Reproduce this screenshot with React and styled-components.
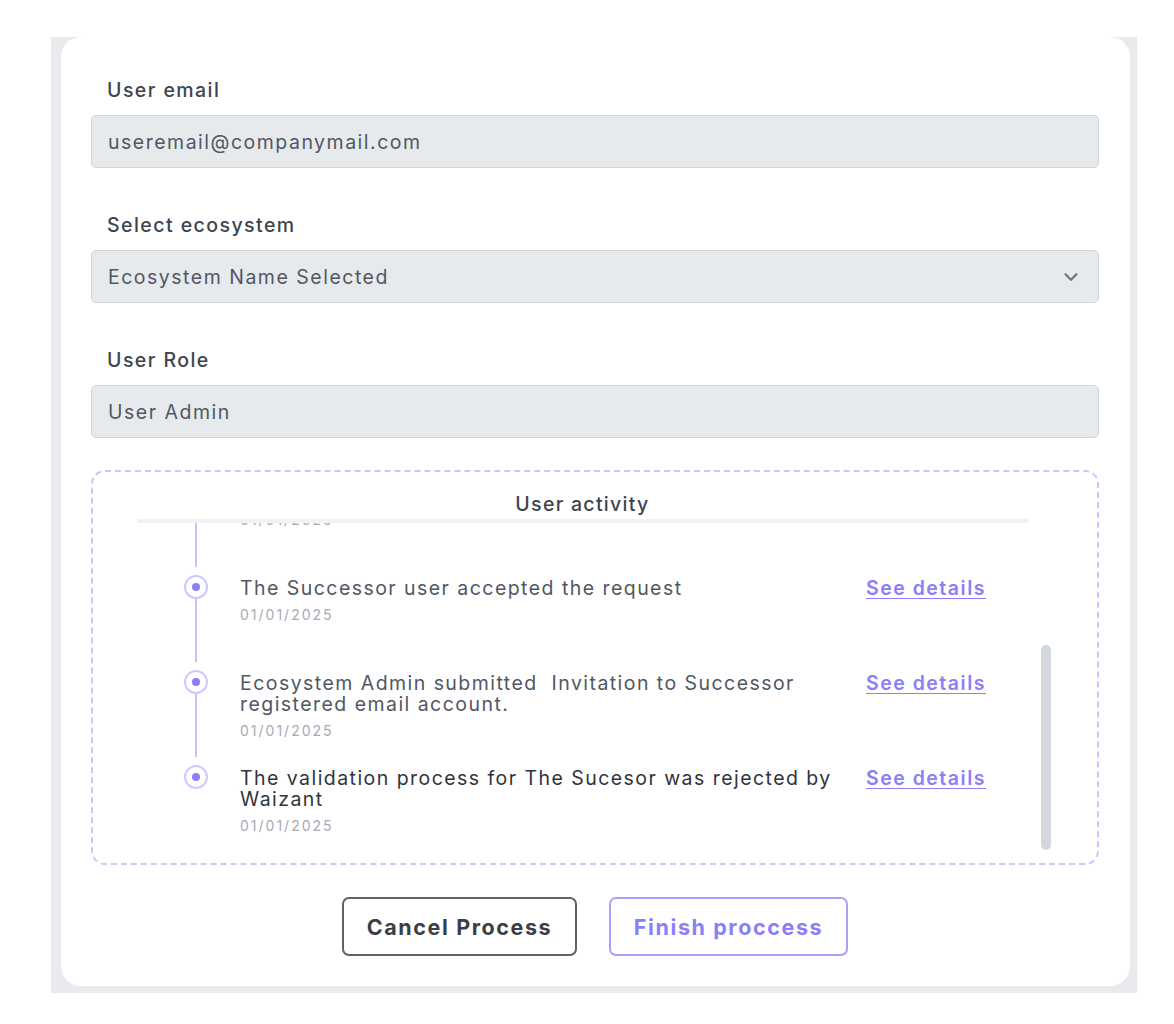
import React, { useLayoutEffect, useRef } from 'react';
import styled, { createGlobalStyle } from 'styled-components';
import { ChevronDown } from 'lucide-react';

const GlobalStyle = createGlobalStyle`
    body {
        margin: 0;
        background: #fff;
        font-family: 'Inter', 'Liberation Sans', sans-serif;
    }
`;

const Page = styled.div`
    padding: 37px 0 0 51px;
`;

const Frame = styled.div`
    width: 1086px;
    box-sizing: border-box;
    background: #e8eaed;
    padding: 0 7px 7px 10px;
`;

const Card = styled.div`
    background: #fff;
    border-radius: 20px;
    padding: 42px 31px 30px 30px;
    display: flex;
    flex-direction: column;
`;

const Field = styled.div`
    display: flex;
    flex-direction: column;
    margin-bottom: 46px;
`;

const Label = styled.label`
    padding-left: 16px;
    margin-bottom: 14px;
    font-size: 19.5px;
    line-height: 22px;
    font-weight: 500;
    letter-spacing: 1.45px;
    color: #3d4451;
`;

const InputBox = styled.div`
    height: 53px;
    box-sizing: border-box;
    display: flex;
    align-items: center;
    justify-content: space-between;
    padding: 0 16px 0 16px;
    background: #e7eaed;
    border: 1px solid #d0d5db;
    border-radius: 5px;
    font-size: 19.5px;
    letter-spacing: 1.5px;
    color: #505764;
    svg {
        color: #6b7280;
    }
`;

const ActivityBox = styled.div`
    margin-top: -14px;
    border: 2px dashed #cdc6fb;
    border-radius: 14px;
    padding: 21px 46px 13px 44px;
`;

const ActivityHeader = styled.div`
    width: 891px;
    text-align: center;
    font-size: 19.5px;
    line-height: 22px;
    font-weight: 500;
    letter-spacing: 1.3px;
    color: #3d4451;
    padding-bottom: 4px;
    border-bottom: 4px solid #f1f3f3;
`;

const ScrollArea = styled.div`
    display: flex;
    height: 327px;
`;

const Scroller = styled.div`
    flex: 1;
    overflow-y: auto;
    scrollbar-width: none;
    &::-webkit-scrollbar {
        display: none;
    }
`;

const ScrollTrack = styled.div`
    width: 10px;
    flex-shrink: 0;
`;

const ScrollThumb = styled.div`
    margin-top: 122px;
    height: 205px;
    border-radius: 5px;
    background: #d3d8de;
`;

const List = styled.div`
    padding: 60px 0 0 47px;
`;

const Item = styled.div`
    display: grid;
    grid-template-columns: 24px 632px auto;
    align-items: start;
    height: 95px;
    &:last-child {
        height: 85px;
    }
`;

const Rail = styled.div`
    position: relative;
    width: 24px;
    height: 24px;
    &::after {
        content: '';
        position: absolute;
        left: 11px;
        top: 24px;
        width: 2px;
        height: 63px;
        background: #c6c0fc;
    }
    ${Item}:last-child &::after {
        display: none;
    }
`;

const Dot = styled.div`
    width: 24px;
    height: 24px;
    box-sizing: border-box;
    border-radius: 50%;
    border: 2px solid #cfc9fd;
    display: flex;
    align-items: center;
    justify-content: center;
    &::before {
        content: '';
        width: 8px;
        height: 8px;
        border-radius: 50%;
        background: #8a7ff8;
    }
`;

const ItemBody = styled.div`
    padding: 3px 0 0 32px;
`;

const ItemTitle = styled.div`
    font-size: 19.5px;
    line-height: 21px;
    letter-spacing: 1.45px;
    white-space: pre-wrap;
    color: ${({ dark }) => (dark ? '#2f343c' : '#505764')};
`;

const ItemDate = styled.div`
    margin-top: 8px;
    font-size: 14px;
    line-height: 16px;
    letter-spacing: 2px;
    color: #a4abb6;
`;

const DetailsLink = styled.a`
    margin: 3px 0 0 26px;
    font-size: 19.5px;
    line-height: 21px;
    font-weight: 600;
    letter-spacing: 1.5px;
    color: #8a7ff8;
    text-decoration: underline;
    text-underline-offset: 3px;
    white-space: nowrap;
    cursor: pointer;
`;

const Actions = styled.div`
    display: flex;
    justify-content: center;
    gap: 32px;
    margin-top: 32px;
`;

const Button = styled.button`
    width: ${({ wide }) => (wide ? '239px' : '235px')};
    height: 59px;
    padding: 0;
    background: #fff;
    border: 2px solid ${({ primary }) => (primary ? '#aaa1fb' : '#5c636d')};
    border-radius: 7px;
    font-family: inherit;
    font-size: 21.5px;
    font-weight: 700;
    letter-spacing: 1.6px;
    color: ${({ primary }) => (primary ? '#8a7ff8' : '#3a3f47')};
    cursor: pointer;
`;

const activity = [
    { title: 'The Successor user registered the account', date: '01/01/2025' },
    { title: 'Ecosystem Admin started the succession request', date: '01/01/2025' },
    { title: 'The Successor user accepted the request', date: '01/01/2025' },
    {
        title: 'Ecosystem Admin submitted  Invitation to Successor registered email account.',
        date: '01/01/2025',
    },
    {
        title: 'The validation process for The Sucesor was rejected by Waizant',
        date: '01/01/2025',
        dark: true,
    },
];

function App() {
    const scrollRef = useRef(null);

    useLayoutEffect(() => {
        const el = scrollRef.current;
        if (el) el.scrollTop = el.scrollHeight;
    }, []);

    return (
        <Page>
            <GlobalStyle />
            <Frame>
                <Card>
                    <Field>
                        <Label>User email</Label>
                        <InputBox>useremail@companymail.com</InputBox>
                    </Field>
                    <Field>
                        <Label>Select ecosystem</Label>
                        <InputBox>
                            Ecosystem Name Selected
                            <ChevronDown size={22} strokeWidth={2.4} />
                        </InputBox>
                    </Field>
                    <Field>
                        <Label>User Role</Label>
                        <InputBox>User Admin</InputBox>
                    </Field>
                    <ActivityBox>
                        <ActivityHeader>User activity</ActivityHeader>
                        <ScrollArea>
                            <Scroller ref={scrollRef}>
                                <List>
                                    {activity.map((item, i) => (
                                        <Item key={i}>
                                            <Rail>
                                                <Dot />
                                            </Rail>
                                            <ItemBody>
                                                <ItemTitle dark={item.dark}>{item.title}</ItemTitle>
                                                <ItemDate>{item.date}</ItemDate>
                                            </ItemBody>
                                            <DetailsLink>See details</DetailsLink>
                                        </Item>
                                    ))}
                                </List>
                            </Scroller>
                            <ScrollTrack>
                                <ScrollThumb />
                            </ScrollTrack>
                        </ScrollArea>
                    </ActivityBox>
                    <Actions>
                        <Button>Cancel Process</Button>
                        <Button primary wide>
                            Finish proccess
                        </Button>
                    </Actions>
                </Card>
            </Frame>
        </Page>
    );
}

export default App;
